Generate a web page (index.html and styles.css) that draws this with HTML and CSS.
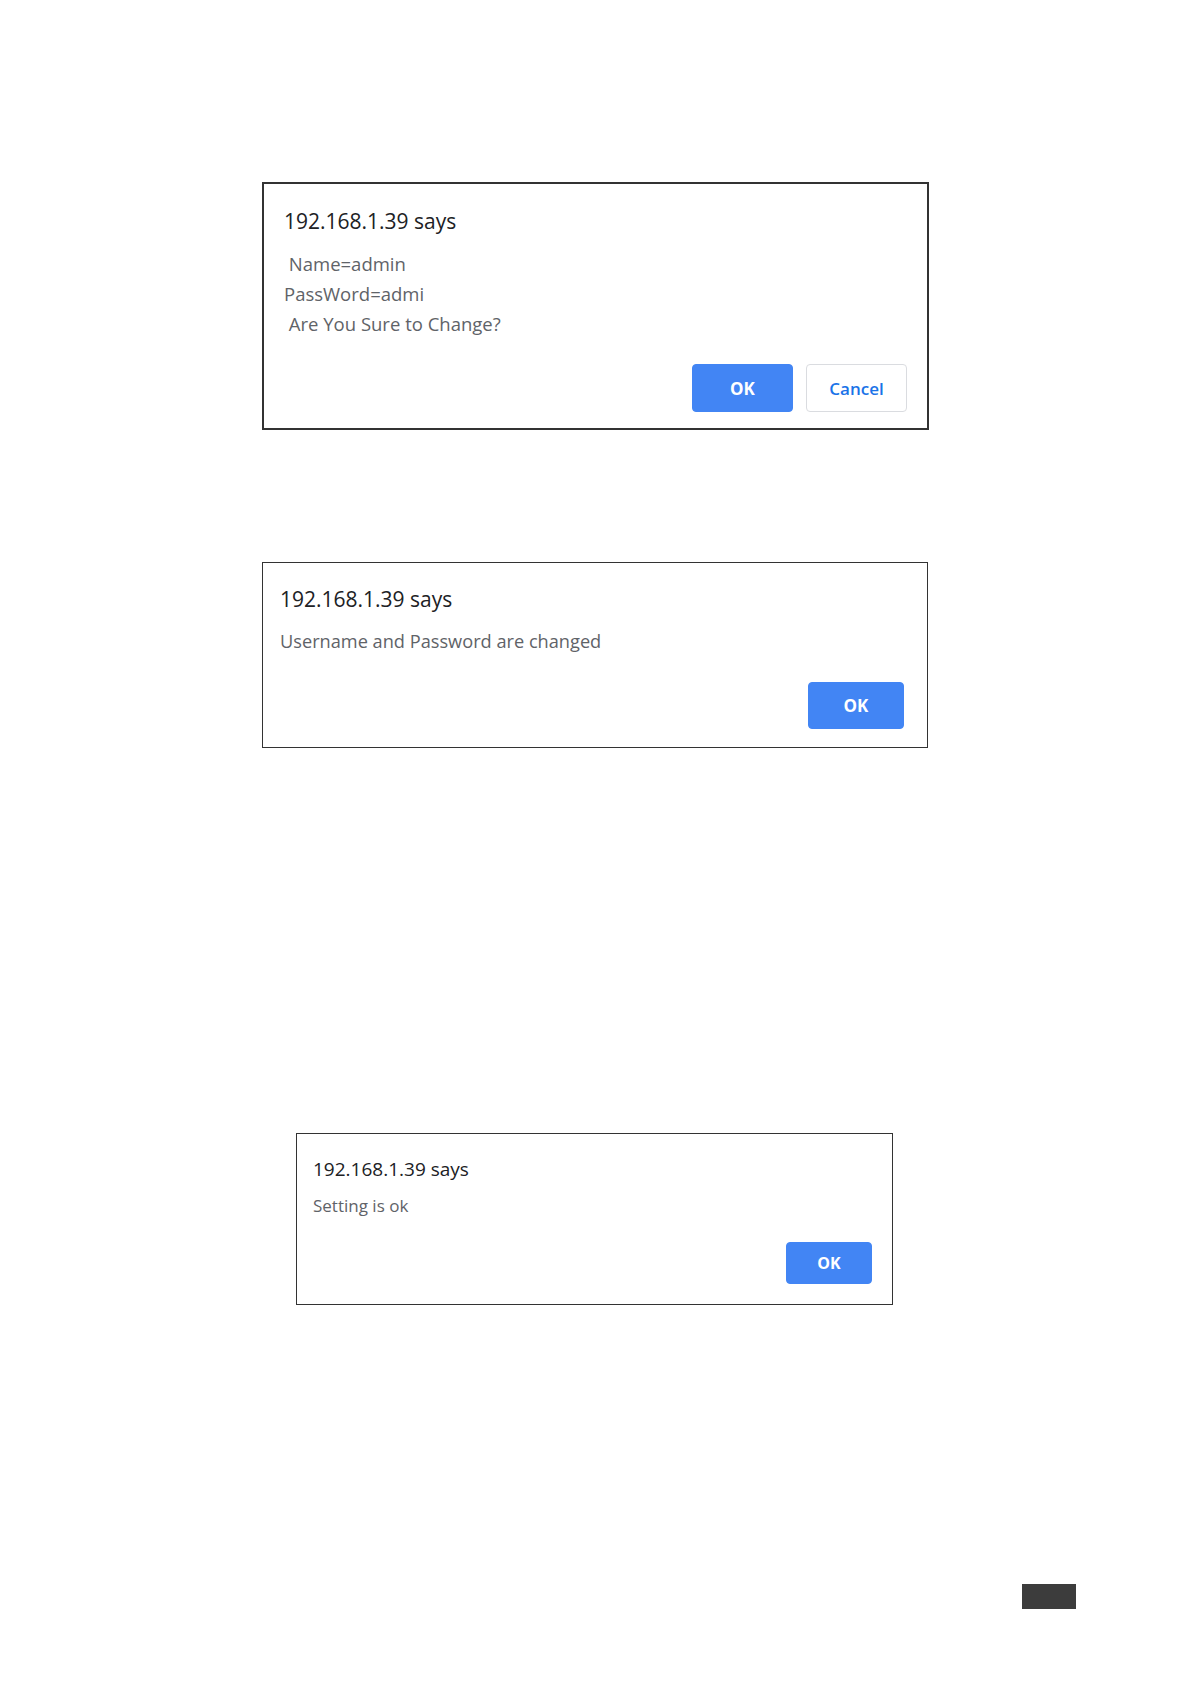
FILE: index.html
```html
<!DOCTYPE html>
<html lang="en">
<head>
<meta charset="utf-8">
<title>Dialogs</title>
<link rel="stylesheet" href="styles.css">
</head>
<body>
<div class="page">
  <div class="dialog dialog-confirm">
    <div class="title">192.168.1.39 says</div>
    <div class="message">
      <div class="line"> Name=admin</div>
      <div class="line">PassWord=admi</div>
      <div class="line"> Are You Sure to Change?</div>
    </div>
    <div class="actions">
      <button class="btn btn-ok">OK</button>
      <button class="btn btn-cancel">Cancel</button>
    </div>
  </div>

  <div class="dialog dialog-changed">
    <div class="title">192.168.1.39 says</div>
    <div class="message">
      <div class="line">Username and Password are changed</div>
    </div>
    <div class="actions">
      <button class="btn btn-ok">OK</button>
    </div>
  </div>

  <div class="dialog dialog-setting">
    <div class="title">192.168.1.39 says</div>
    <div class="message">
      <div class="line">Setting is ok</div>
    </div>
    <div class="actions">
      <button class="btn btn-ok">OK</button>
    </div>
  </div>

  <div class="page-tab"></div>
</div>
</body>
</html>
```

FILE: styles.css
```css
html, body {
  margin: 0;
  padding: 0;
  background: #ffffff;
}

.page {
  width: 1191px;
  height: 1684px;
  display: flex;
  flex-direction: column;
  align-items: flex-start;
  font-family: "Open Sans", "Noto Sans", "Liberation Sans", sans-serif;
}

.dialog {
  box-sizing: border-box;
  display: flex;
  flex-direction: column;
  background: #ffffff;
  border: 1px solid #333333;
}

.title {
  color: #202124;
  white-space: pre;
}

.message {
  color: #5f6368;
}

.line {
  white-space: pre;
}

.actions {
  display: flex;
  justify-content: flex-end;
  gap: 13px;
}

.btn {
  box-sizing: border-box;
  font-family: "Open Sans", "Noto Sans", "Liberation Sans", sans-serif;
  font-weight: 700;
  border-radius: 4px;
  padding: 0;
  margin: 0;
}

.btn-ok {
  background: #4285f4;
  border: 1px solid #4285f4;
  color: #ffffff;
}

.btn-cancel {
  background: #ffffff;
  border: 1px solid #dadce0;
  color: #1a73e8;
  font-weight: 600;
}

/* Dialog 1 */
.dialog-confirm {
  margin-top: 182px;
  margin-left: 262px;
  width: 667px;
  height: 248px;
  border-width: 2px;
  padding: 25px 20px 16px 20px;
}
.dialog-confirm .title {
  font-size: 21px;
  line-height: 24px;
}
.dialog-confirm .message {
  margin-top: 16px;
  font-size: 18.5px;
  line-height: 30px;
}
.dialog-confirm .actions {
  margin-top: 25px;
}
.dialog-confirm .btn {
  width: 101px;
  height: 48px;
  font-size: 17px;
}

/* Dialog 2 */
.dialog-changed {
  margin-top: 132px;
  margin-left: 262px;
  width: 666px;
  height: 186px;
  padding: 24px 23px 18px 17px;
}
.dialog-changed .title {
  font-size: 21px;
  line-height: 24px;
}
.dialog-changed .message {
  margin-top: 15px;
  font-size: 18.2px;
  line-height: 30px;
}
.dialog-changed .actions {
  margin-top: 26px;
}
.dialog-changed .btn {
  width: 96px;
  height: 47px;
  font-size: 17px;
}

/* Dialog 3 */
.dialog-setting {
  margin-top: 385px;
  margin-left: 296px;
  width: 597px;
  height: 172px;
  padding: 24px 20px 20px 16px;
}
.dialog-setting .title {
  font-size: 19px;
  line-height: 22px;
}
.dialog-setting .message {
  margin-top: 14px;
  font-size: 17px;
  line-height: 24px;
}
.dialog-setting .actions {
  margin-top: 24px;
}
.dialog-setting .btn {
  width: 86px;
  height: 42px;
  font-size: 16px;
}

.page-tab {
  margin-top: 279px;
  margin-left: 1022px;
  width: 54px;
  height: 25px;
  background: #3c3c3c;
}
```
